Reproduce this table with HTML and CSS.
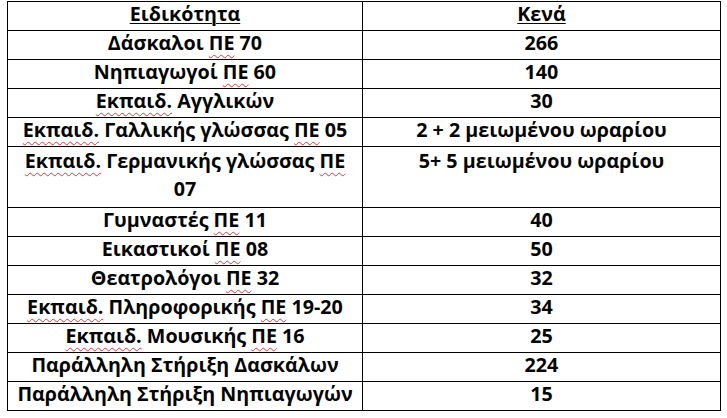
FILE: index.html
```html
<!DOCTYPE html>
<html lang="el">
<head>
<meta charset="utf-8">
<title>Κενά</title>
<link rel="stylesheet" href="styles.css">
</head>
<body>
<table class="grid">
  <colgroup><col class="c1"><col class="c2"></colgroup>
  <tr><td><span class="u">Ειδικότητα</span></td><td><span class="u">Κενά</span></td></tr>
  <tr><td>Δάσκαλοι <span class="sp">ΠΕ</span> 70</td><td>266</td></tr>
  <tr><td>Νηπιαγωγοί <span class="sp">ΠΕ</span> 60</td><td>140</td></tr>
  <tr><td><span class="sp">Εκπαιδ.</span> Αγγλικών</td><td>30</td></tr>
  <tr><td><span class="sp">Εκπαιδ.</span> Γαλλικής γλώσσας <span class="sp">ΠΕ</span> 05</td><td>2 + 2 μειωμένου ωραρίου</td></tr>
  <tr class="double"><td><span class="sp">Εκπαιδ.</span> Γερμανικής γλώσσας <span class="sp">ΠΕ</span><br>07</td><td>5+ 5 μειωμένου ωραρίου</td></tr>
  <tr><td>Γυμναστές <span class="sp">ΠΕ</span> 11</td><td>40</td></tr>
  <tr><td>Εικαστικοί <span class="sp">ΠΕ</span> 08</td><td>50</td></tr>
  <tr><td>Θεατρολόγοι <span class="sp">ΠΕ</span> 32</td><td>32</td></tr>
  <tr><td><span class="sp">Εκπαιδ.</span> Πληροφορικής <span class="sp">ΠΕ</span> 19-20</td><td>34</td></tr>
  <tr><td><span class="sp">Εκπαιδ.</span> Μουσικής <span class="sp">ΠΕ</span> 16</td><td>25</td></tr>
  <tr><td>Παράλληλη Στήριξη Δασκάλων</td><td>224</td></tr>
  <tr><td>Παράλληλη Στήριξη Νηπιαγωγών</td><td>15</td></tr>
</table>
</body>
</html>
```
FILE: styles.css
```css
html, body {
  margin: 0;
  padding: 0;
  background: #ffffff;
}

body {
  padding: 1px 0 0 7px;
  font-family: "Open Sans", "Noto Sans", "DejaVu Sans", sans-serif;
  font-weight: 700;
  font-size: 19.7px;
  letter-spacing: 0;
  color: #050505;
}

.grid {
  border-collapse: collapse;
  table-layout: fixed;
  width: 713px;
}

.c1 { width: 355px; }
.c2 { width: 358px; }

.grid td {
  border: 1px solid #000000;
  padding: 0 2px 5px;
  line-height: 23px;
  height: 23px;
  text-align: center;
  vertical-align: top;
  white-space: nowrap;
  overflow: hidden;
}

.grid .double td {
  line-height: 28px;
  padding-bottom: 4px;
  height: 56px;
}

.u {
  text-decoration: underline;
  text-decoration-thickness: 1px;
  text-underline-offset: 2px;
}

.sp {
  text-decoration: underline wavy #d83a3a;
  text-decoration-thickness: 1px;
  text-underline-offset: 4px;
  text-decoration-skip-ink: none;
}
```
